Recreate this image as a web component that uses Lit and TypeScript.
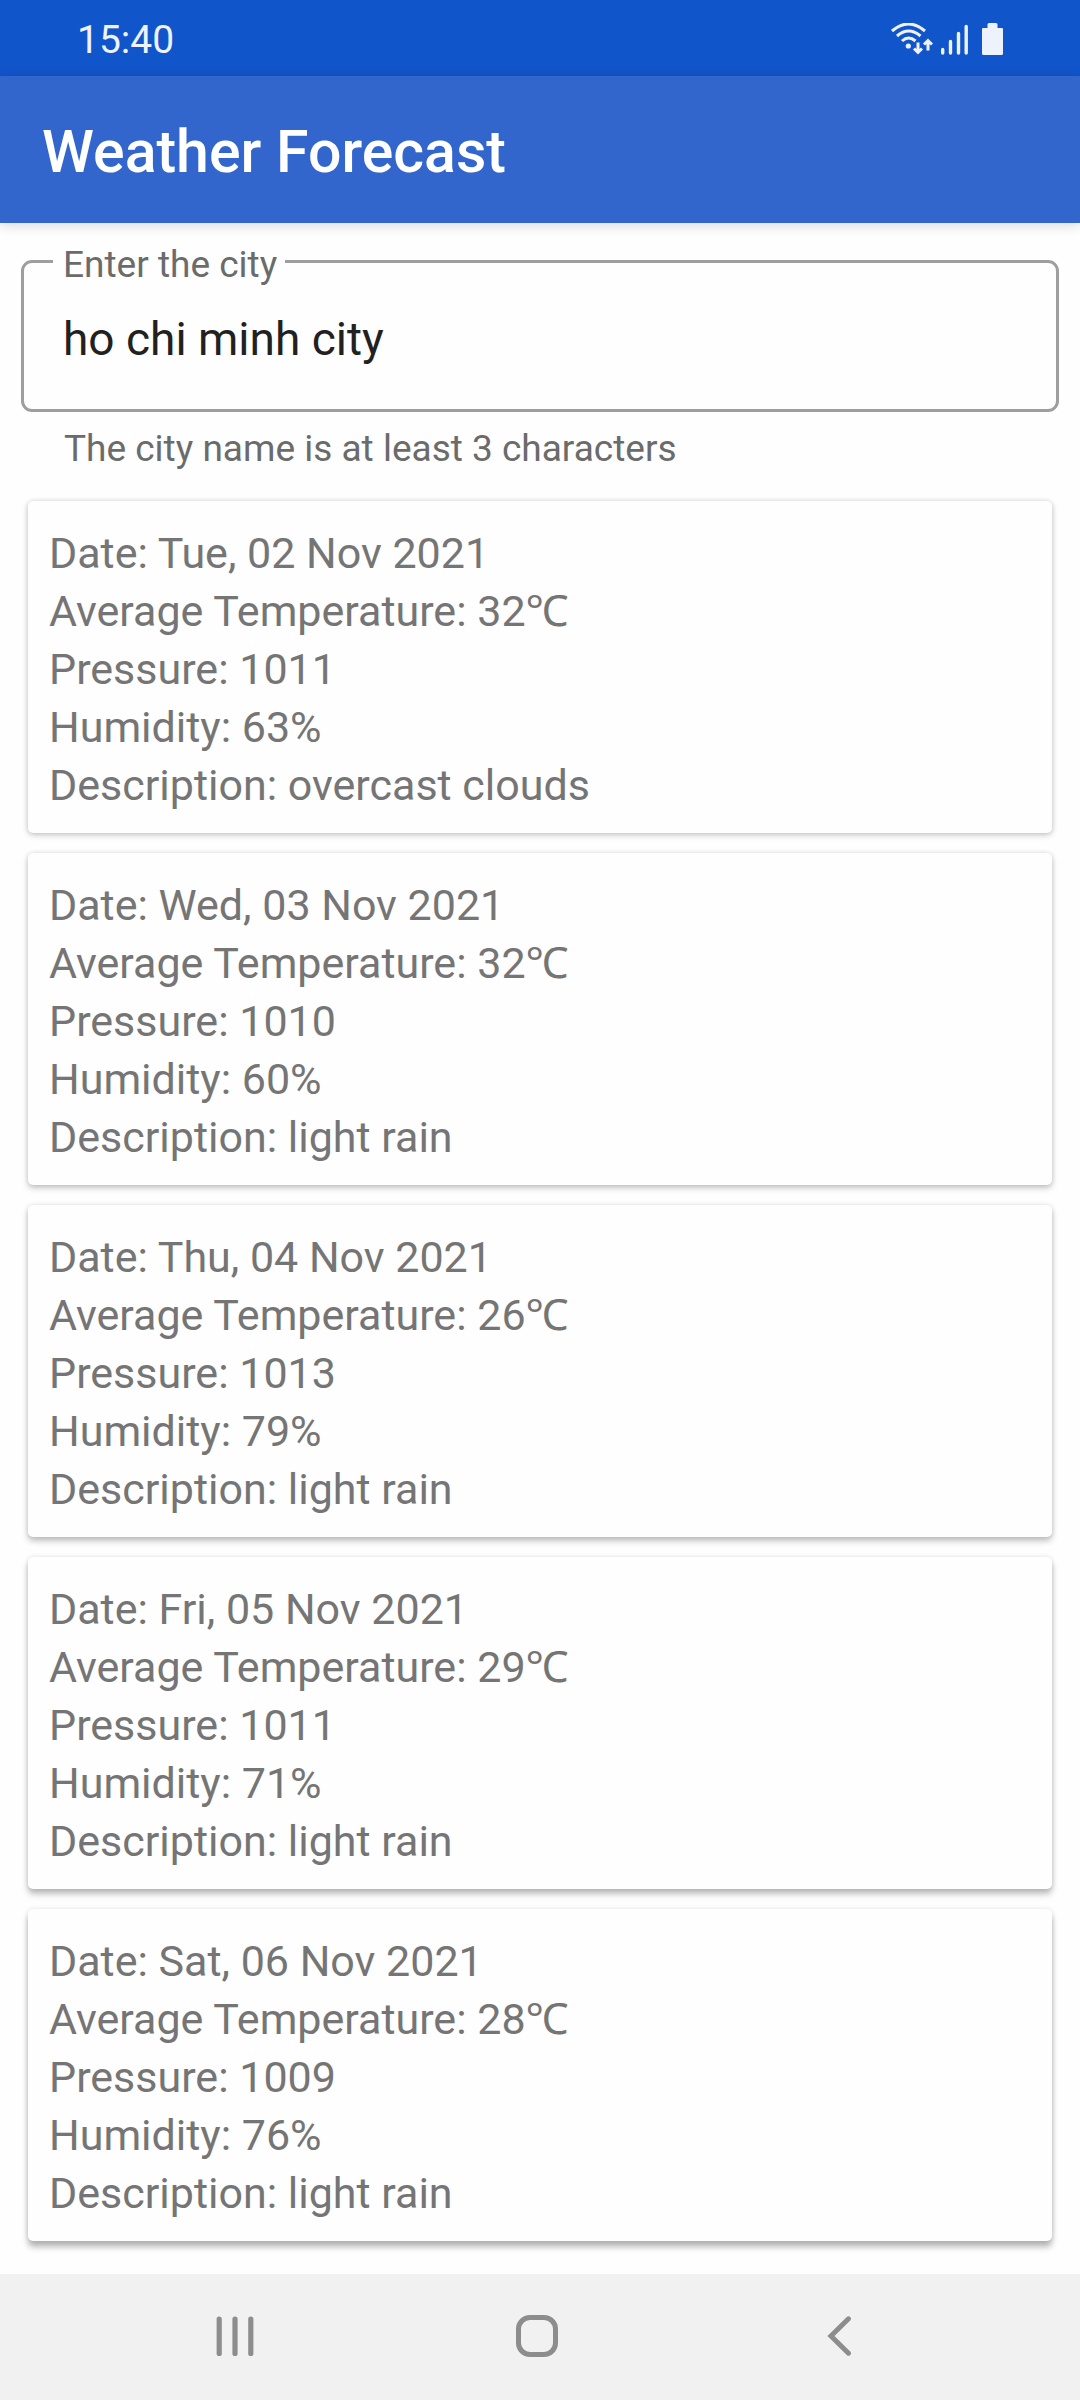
import { LitElement, html, css } from "lit";
import { customElement, property, state } from "lit/decorators.js";
import { styleMap } from "lit/directives/style-map.js";

interface Forecast {
  date: string;
  temperature: number;
  pressure: number;
  humidity: number;
  description: string;
}

const FORECASTS: Forecast[] = [
  { date: "Tue, 02 Nov 2021", temperature: 32, pressure: 1011, humidity: 63, description: "overcast clouds" },
  { date: "Wed, 03 Nov 2021", temperature: 32, pressure: 1010, humidity: 60, description: "light rain" },
  { date: "Thu, 04 Nov 2021", temperature: 26, pressure: 1013, humidity: 79, description: "light rain" },
  { date: "Fri, 05 Nov 2021", temperature: 29, pressure: 1011, humidity: 71, description: "light rain" },
  { date: "Sat, 06 Nov 2021", temperature: 28, pressure: 1009, humidity: 76, description: "light rain" },
];

@customElement("status-bar")
class StatusBar extends LitElement {
  static styles = css`
    :host {
      display: flex;
      box-sizing: border-box;
      align-items: center;
      justify-content: space-between;
      height: 76px;
      padding: 3px 77px 0;
      background: #1155cb;
      color: #edf2fb;
      font-size: 39px;
      line-height: 46px;
    }
    .icons {
      display: flex;
      align-items: center;
      gap: 8px;
    }
    .battery {
      margin-left: 6px;
    }
    svg {
      display: block;
    }
  `;

  render() {
    return html`
      <time class="time">15:40</time>
      <div class="icons">
        <svg width="42" height="34" viewBox="0 0 42 34" aria-label="Wi-Fi">
          <g fill="none" stroke="currentColor" stroke-width="3">
            <path d="M1 8Q17.500 -6 34 8" />
            <path d="M6 13Q17.500 3 29.500 13" />
            <path d="M11 18Q17.500 12 24.500 18" />
          </g>
          <circle cx="17.300" cy="23" r="2.600" fill="currentColor" />
          <g fill="none" stroke="currentColor" stroke-width="3">
            <path d="M27 19.500v10M23 25.500l4 4 4-4M37 27.500v-9M33 21.500l4-4 4 4" />
          </g>
        </svg>
        <svg width="27" height="34" viewBox="0 0 27 34" aria-label="Signal">
          <g stroke="currentColor" stroke-width="3.400" stroke-linecap="round">
            <path d="M1.700 26.500v3.500M9.500 18.500v11.500M17.500 10.500v19.500M25.200 3.500v26.500" />
          </g>
        </svg>
        <svg class="battery" width="21" height="34" viewBox="0 0 21 34" aria-label="Battery">
          <path
            fill="currentColor"
            d="M7 0h7a1.500 1.500 0 0 1 1.500 1.500V5H20a1 1 0 0 1 1 1v24.500a1.500 1.500 0 0 1-1.500 1.500h-18A1.500 1.500 0 0 1 0 30.500V6a1 1 0 0 1 1-1h4.500V1.500A1.500 1.500 0 0 1 7 0z"
          />
        </svg>
      </div>
    `;
  }
}

@customElement("forecast-card")
class ForecastCard extends LitElement {
  @property({ attribute: false }) forecast!: Forecast;
  @property({ type: Number }) depth = 0;

  static styles = css`
    :host {
      display: block;
    }
    .card {
      padding: 23px 21px 19px;
      border-radius: 5px;
      background: #fefefe;
    }
    .line {
      margin: 0;
      color: #757575;
      font-size: 43px;
      line-height: 58px;
    }
  `;

  render() {
    const f = this.forecast;
    const shadow = {
      boxShadow: `0 ${2 + this.depth}px 6px rgba(0, 0, 0, ${0.2 + this.depth * 0.02}), 0 0 5px rgba(0, 0, 0, 0.1)`,
    };
    return html`
      <article class="card" style=${styleMap(shadow)}>
        <p class="line">Date: ${f.date}</p>
        <p class="line">Average Temperature: ${f.temperature}℃</p>
        <p class="line">Pressure: ${f.pressure}</p>
        <p class="line">Humidity: ${f.humidity}%</p>
        <p class="line">Description: ${f.description}</p>
      </article>
    `;
  }
}

@customElement("navigation-bar")
class NavigationBar extends LitElement {
  static styles = css`
    :host {
      display: grid;
      grid-template-columns: repeat(3, 1fr);
      height: 126px;
      padding: 0 90px 0 84px;
      background: #f1f1f1;
    }
    .key {
      display: flex;
      align-items: center;
      justify-content: center;
      padding: 0;
      border: 0;
      background: none;
      color: #8d8d8d;
    }
  `;

  render() {
    return html`
      <button class="key" aria-label="Recent apps">
        <svg width="44" height="44" viewBox="0 0 44 44">
          <path d="M6.200 4v34.500M22 4v34.500M37.800 4v34.500" stroke="currentColor" stroke-width="5.200" stroke-linecap="round" />
        </svg>
      </button>
      <button class="key" aria-label="Home">
        <svg width="44" height="44" viewBox="0 0 44 44">
          <rect x="3.500" y="2.500" width="37" height="37" rx="11.500" fill="none" stroke="currentColor" stroke-width="5" />
        </svg>
      </button>
      <button class="key" aria-label="Back">
        <svg width="44" height="44" viewBox="0 0 44 44">
          <path d="M31.500 3.800L14 21l17.500 17.200" fill="none" stroke="currentColor" stroke-width="5" stroke-linecap="round" />
        </svg>
      </button>
    `;
  }
}

@customElement("app-root")
class AppRoot extends LitElement {
  @state() private city = "ho chi minh city";

  static styles = css`
    :host {
      display: flex;
      flex-direction: column;
      min-height: 100vh;
      background: #fefefe;
      font-family: Roboto, "Noto Sans", "Noto Sans CJK SC", sans-serif;
    }
    .app-bar {
      display: flex;
      box-sizing: border-box;
      align-items: center;
      height: 147px;
      padding: 4px 42px 0;
      background: #3266cc;
      box-shadow: 0 2px 12px rgba(0, 0, 0, 0.16);
    }
    .title {
      margin: 0;
      color: #ffffff;
      font-size: 59px;
      font-weight: 500;
      line-height: 68px;
    }
    .content {
      flex: 1;
      padding: 14px 21px 33px;
    }
    .field {
      min-width: 0;
      margin: 0;
      padding: 0 38px;
      border: 3px solid #9e9e9e;
      border-radius: 11px;
    }
    .legend {
      margin-left: -9px;
      padding: 8px 8px 0 10px;
      color: #6b6b6b;
      font-size: 37px;
      line-height: 40px;
    }
    .input {
      display: block;
      box-sizing: border-box;
      width: 100%;
      height: 124px;
      padding: 0 1px 17px;
      border: 0;
      outline: 0;
      background: none;
      color: #212121;
      font-family: inherit;
      font-size: 46px;
    }
    .helper {
      margin: 15px 43px 0;
      color: #6b6b6b;
      font-size: 37px;
      line-height: 44px;
    }
    .cards {
      display: grid;
      gap: 20px;
      margin: 30px 7px 0;
    }
  `;

  private onInput(e: Event) {
    this.city = (e.target as HTMLInputElement).value;
  }

  render() {
    return html`
      <status-bar></status-bar>
      <header class="app-bar"><h1 class="title">Weather Forecast</h1></header>
      <main class="content">
        <fieldset class="field">
          <legend class="legend"><label for="city">Enter the city</label></legend>
          <input
            class="input"
            id="city"
            type="text"
            aria-describedby="city-help"
            .value=${this.city}
            @input=${this.onInput}
          />
        </fieldset>
        <p class="helper" id="city-help">The city name is at least 3 characters</p>
        <section class="cards" aria-label="Forecast">
          ${FORECASTS.map((f, i) => html`<forecast-card .forecast=${f} .depth=${i}></forecast-card>`)}
        </section>
      </main>
      <navigation-bar></navigation-bar>
    `;
  }
}
